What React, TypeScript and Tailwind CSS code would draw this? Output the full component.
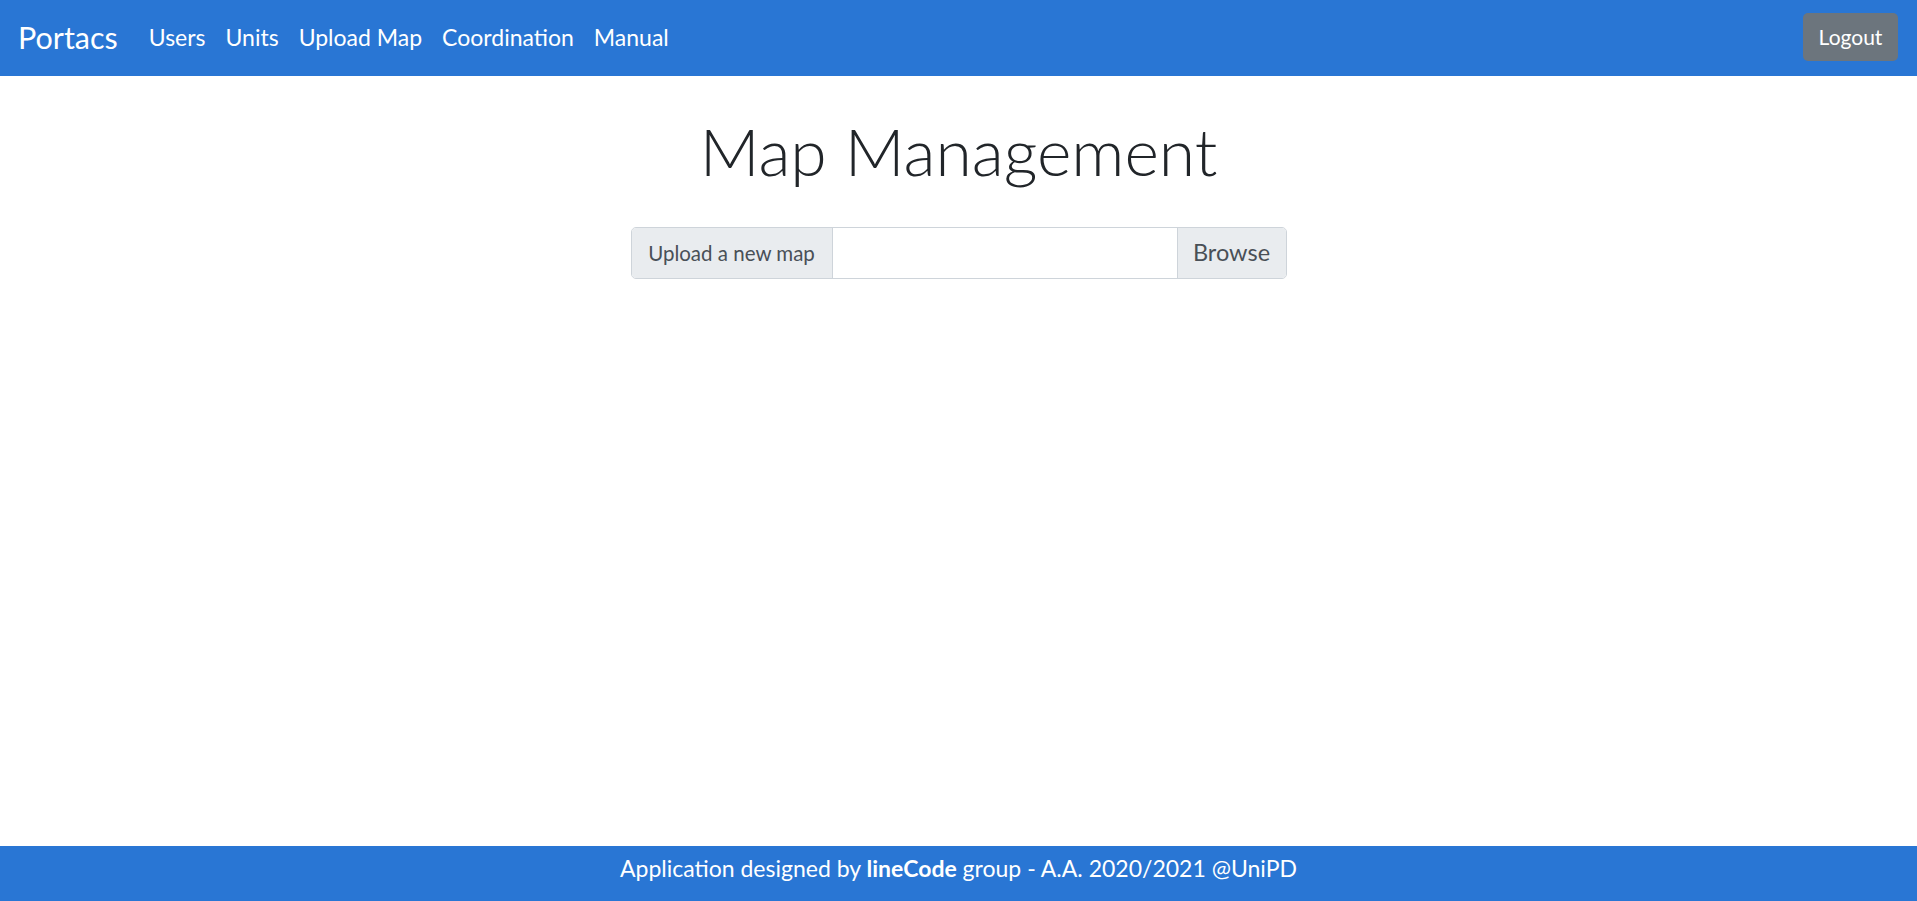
const navLinks = ['Users', 'Units', 'Upload Map', 'Coordination', 'Manual'];

export default function App() {
  return (
    <div className="min-h-[901px] flex flex-col bg-white font-['Lato','Noto_Sans',sans-serif] text-[#212529]">
      <nav className="h-[76px] bg-[#2976d4] flex items-center justify-between pl-[18px] pr-[19px] pb-[2px]">
        <div className="flex items-center">
          <a className="text-white text-[30.5px] leading-none mr-[21px]">Portacs</a>
          {navLinks.map((l) => (
            <a key={l} className="text-white text-[23px] leading-none px-[10px]">
              {l}
            </a>
          ))}
        </div>
        <button className="h-[48px] w-[95px] rounded-[5px] bg-[#6c757d] text-white text-[21px]">Logout</button>
      </nav>

      <main className="flex-1 flex flex-col items-center">
        <h1 className="mt-[42px] text-[66px] font-light leading-none text-[#212529]">Map Management</h1>
        <div className="mt-[43px] w-[656px] h-[52px] flex border border-[#ced4da] rounded-[5px] overflow-hidden">
          <span className="w-[201px] flex items-center justify-center bg-[#e9ecef] border-r border-[#ced4da] text-[20.5px] text-[#495057]">
            Upload a new map
          </span>
          <span className="flex-1 bg-white" />
          <span className="w-[109px] flex items-center justify-center bg-[#e9ecef] border-l border-[#ced4da] text-[23.5px] text-[#495057]">
            Browse
          </span>
        </div>
      </main>

      <footer className="h-[55px] bg-[#2976d4] flex items-center justify-center pb-[10px] text-white text-[23px]">
        <span>
          Application designed by <b>lineCode</b> group - A.A. 2020/2021 @UniPD
        </span>
      </footer>
    </div>
  );
}
